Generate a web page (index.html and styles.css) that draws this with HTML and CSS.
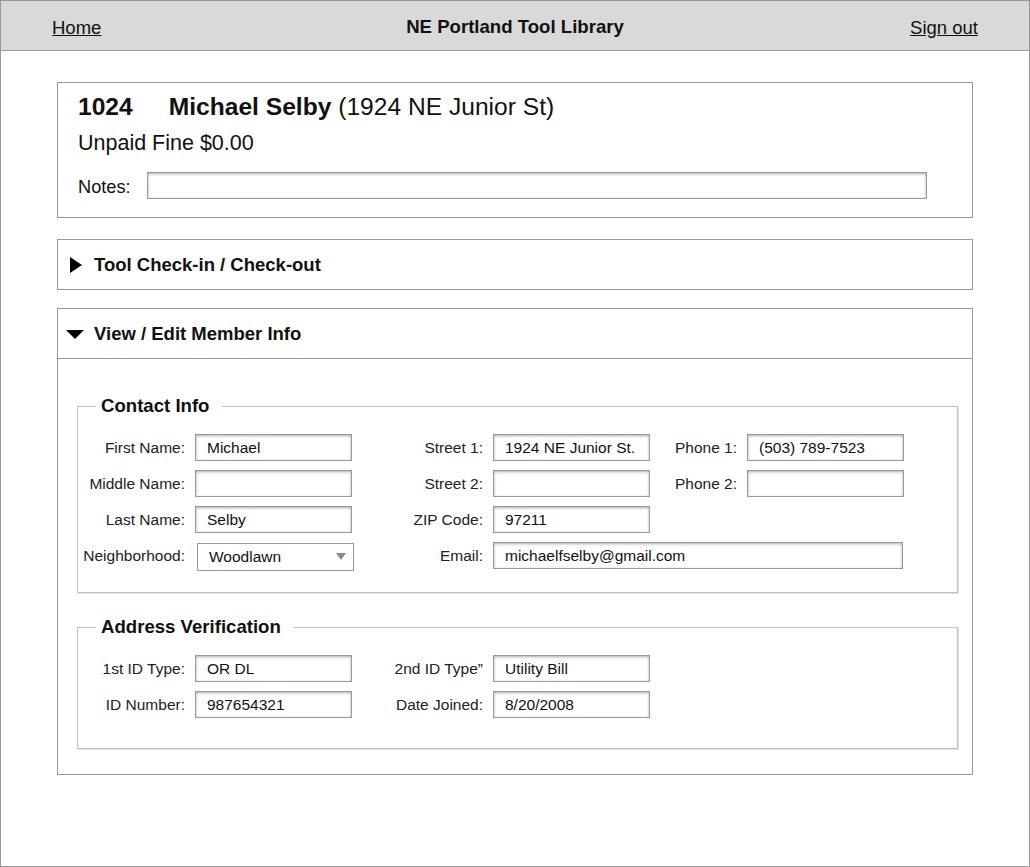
FILE: index.html
```html
<!DOCTYPE html>
<html lang="en">
<head>
<meta charset="utf-8">
<title>NE Portland Tool Library</title>
<link rel="stylesheet" href="styles.css">
</head>
<body>
<div class="page">
  <header class="topbar">
    <a class="nav-link" href="#">Home</a>
    <div class="site-title">NE Portland Tool Library</div>
    <a class="nav-link nav-right" href="#">Sign out</a>
  </header>
  <main class="content">
    <section class="card member-card">
      <div class="member-title"><span class="member-id">1024</span><span class="member-name">Michael Selby</span> (1924 NE Junior St)</div>
      <div class="fine">Unpaid Fine $0.00</div>
      <div class="notes-row">
        <label class="notes-label">Notes:</label>
        <input class="field notes-input" type="text" value="">
      </div>
    </section>

    <section class="card checkout-card">
      <div class="card-head">
        <svg class="caret" width="18" height="18" viewBox="0 0 18 18"><polygon points="4,1 16,9 4,17" fill="#000"/></svg>
        <span>Tool Check-in / Check-out</span>
      </div>
    </section>

    <section class="card info-card">
      <div class="card-head head-open">
        <svg class="caret" width="18" height="18" viewBox="0 0 18 18"><polygon points="0,5 18,5 9,14" fill="#000"/></svg>
        <span>View / Edit Member Info</span>
      </div>
      <div class="card-body">
        <fieldset class="group">
          <legend>Contact Info</legend>
          <div class="form-grid contact-grid">
            <label class="lbl">First Name:</label>
            <input class="field" type="text" value="Michael">
            <label class="lbl">Street 1:</label>
            <input class="field" type="text" value="1924 NE Junior St.">
            <label class="lbl">Phone 1:</label>
            <input class="field" type="text" value="(503) 789-7523">

            <label class="lbl">Middle Name:</label>
            <input class="field" type="text" value="">
            <label class="lbl">Street 2:</label>
            <input class="field" type="text" value="">
            <label class="lbl">Phone 2:</label>
            <input class="field" type="text" value="">

            <label class="lbl">Last Name:</label>
            <input class="field" type="text" value="Selby">
            <label class="lbl">ZIP Code:</label>
            <input class="field" type="text" value="97211">
            <span class="spacer"></span>
            <span class="spacer"></span>

            <label class="lbl">Neighborhood:</label>
            <div class="select">
              <span>Woodlawn</span>
              <svg width="10" height="7" viewBox="0 0 10 7"><polygon points="0,0 10,0 5,7" fill="#8c8c8c"/></svg>
            </div>
            <label class="lbl">Email:</label>
            <input class="field email" type="text" value="michaelfselby@gmail.com">
          </div>
        </fieldset>

        <fieldset class="group group-second">
          <legend>Address Verification</legend>
          <div class="form-grid verify-grid">
            <label class="lbl">1st ID Type:</label>
            <input class="field" type="text" value="OR DL">
            <label class="lbl">2nd ID Type”</label>
            <input class="field" type="text" value="Utility Bill">

            <label class="lbl">ID Number:</label>
            <input class="field" type="text" value="987654321">
            <label class="lbl">Date Joined:</label>
            <input class="field" type="text" value="8/20/2008">
          </div>
        </fieldset>
      </div>
    </section>
  </main>
</div>
</body>
</html>
```

FILE: styles.css
```css
* {
  box-sizing: border-box;
}

html, body {
  margin: 0;
  padding: 0;
  background: #fff;
}

body {
  font-family: "Liberation Sans", Arial, Helvetica, sans-serif;
  color: #111;
}

.page {
  width: 1030px;
  height: 867px;
  border: 1px solid #999;
  background: #fff;
}

/* top bar */
.topbar {
  height: 50px;
  background: #d9d9d9;
  border-bottom: 1px solid #999;
  display: grid;
  grid-template-columns: 1fr auto 1fr;
  align-items: center;
  padding: 5px 51px 0 51px;
  font-size: 18.5px;
}

.nav-link {
  color: #111;
  text-decoration: underline;
  justify-self: start;
}

.nav-right {
  justify-self: end;
}

.site-title {
  font-weight: bold;
  color: #111;
  font-size: 18.6px;
  margin-top: -3px;
}

/* main content */
.content {
  padding: 31px 56px 0 56px;
}

.card {
  border: 1px solid #999;
  background: #fff;
}

.member-card {
  padding: 10px 0 18px 20px;
}

.member-title {
  font-size: 24.6px;
  line-height: 28px;
  color: #111;
}

.member-id {
  font-weight: bold;
  margin-right: 36px;
}

.member-name {
  font-weight: bold;
}

.fine {
  margin-top: 9px;
  font-size: 21.5px;
  line-height: 26px;
}

.notes-row {
  margin-top: 16px;
  display: flex;
  align-items: center;
}

.notes-label {
  font-size: 18.2px;
  margin-right: 16px;
  padding-top: 3px;
}

.field {
  width: 157px;
  height: 27px;
  border: 1px solid #9a9a9a;
  background: #fff;
  box-shadow: inset 0 1px 3px rgba(0, 0, 0, 0.32);
  padding: 0 11px;
  font-family: "Liberation Sans", Arial, Helvetica, sans-serif;
  font-size: 15.5px;
  color: #111;
  margin: 0;
  outline: none;
}

.notes-input {
  width: 780px;
}

.checkout-card {
  margin-top: 21px;
}

.info-card {
  margin-top: 18px;
}

.card-head {
  height: 49px;
  display: flex;
  align-items: center;
  gap: 10px;
  padding-left: 8px;
  font-size: 18.5px;
  font-weight: bold;
  color: #111;
}

.caret {
  display: block;
  flex: none;
}

.head-open {
  height: 50px;
  border-bottom: 1px solid #999;
}

.card-body {
  padding: 36px 14px 25px 19px;
}

.group {
  width: 881px;
  margin: 0;
  padding: 0;
  min-width: 0;
  border: 1px solid #c2c2c2;
  box-shadow: 1px 1px 0 #e2e2e2;
}

.group legend {
  margin-left: 18px;
  padding: 0 13px 0 5px;
  font-size: 18.6px;
  line-height: 22px;
  font-weight: bold;
  color: #111;
}

.group-second {
  margin-top: 23px;
}

.form-grid {
  display: grid;
  grid-template-columns: 107px 157px 121px 157px 77px 157px;
  column-gap: 10px;
  row-gap: 9px;
  grid-auto-rows: 27px;
  align-items: center;
}

.contact-grid {
  padding: 17px 0 23px 0;
}

.verify-grid {
  grid-template-columns: 107px 157px 121px 157px;
  padding: 17px 0 30px 0;
}

.lbl {
  justify-self: end;
  font-size: 15.5px;
  color: #222;
  white-space: nowrap;
}

.email {
  grid-column: 4 / 7;
  width: 410px;
  justify-self: start;
}

.select {
  width: 157px;
  height: 28px;
  margin-left: 2px;
  margin-top: 2px;
  border: 1px solid #9a9a9a;
  background: #fff;
  display: flex;
  align-items: center;
  justify-content: space-between;
  padding: 0 7px 0 11px;
  font-size: 15.5px;
  color: #111;
}

.select svg {
  display: block;
}
```
